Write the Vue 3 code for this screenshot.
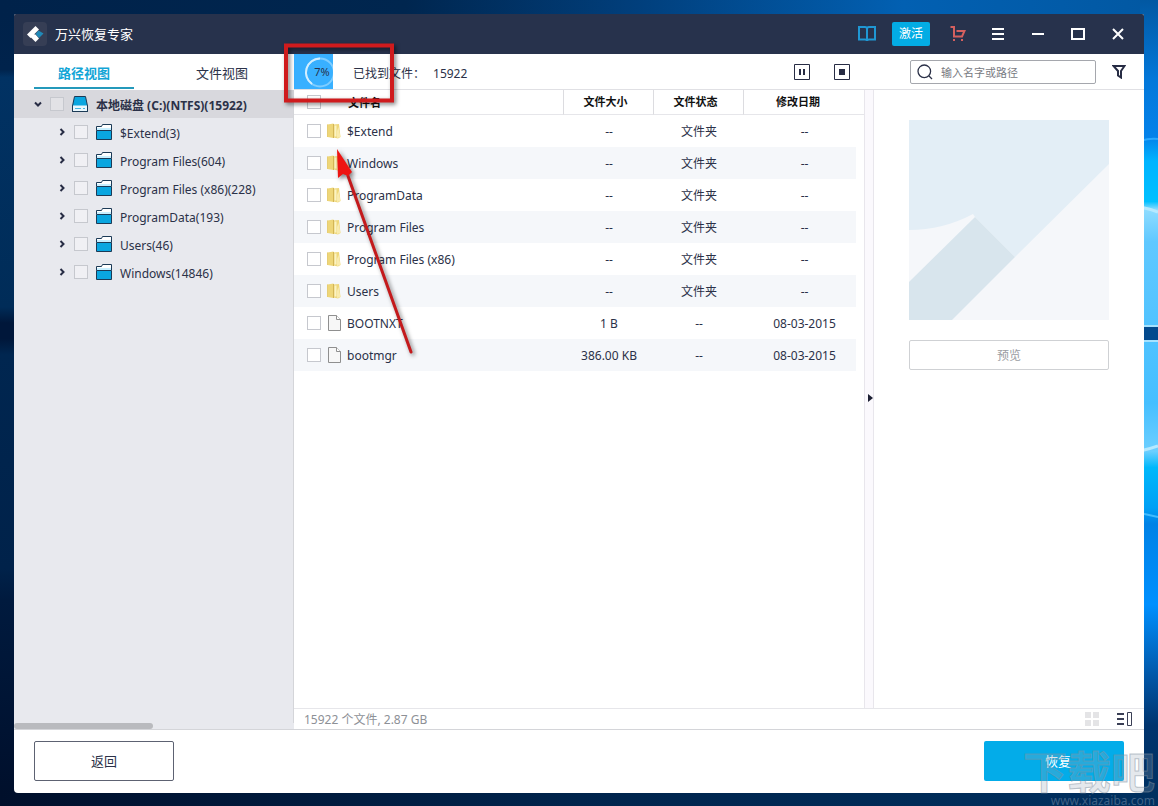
<script setup>
import { ref } from 'vue'

const tree = [
  '$Extend(3)',
  'Program Files(604)',
  'Program Files (x86)(228)',
  'ProgramData(193)',
  'Users(46)',
  'Windows(14846)'
]

const files = [
  { name: '$Extend', dir: true, size: '--', status: '文件夹', date: '--' },
  { name: 'Windows', dir: true, size: '--', status: '文件夹', date: '--' },
  { name: 'ProgramData', dir: true, size: '--', status: '文件夹', date: '--' },
  { name: 'Program Files', dir: true, size: '--', status: '文件夹', date: '--' },
  { name: 'Program Files (x86)', dir: true, size: '--', status: '文件夹', date: '--' },
  { name: 'Users', dir: true, size: '--', status: '文件夹', date: '--' },
  { name: 'BOOTNXT', dir: false, size: '1 B', status: '--', date: '08-03-2015' },
  { name: 'bootmgr', dir: false, size: '386.00 KB', status: '--', date: '08-03-2015' }
]

const query = ref('')
</script>

<template>
  <div class="desktop">
    <svg class="wallpaper" viewBox="0 0 1158 806" preserveAspectRatio="none" aria-hidden="true">
      <defs>
        <linearGradient id="topSky" x1="0" x2="1" y1="0" y2="0">
          <stop offset="0" stop-color="#00224a" />
          <stop offset="0.35" stop-color="#00264f" />
          <stop offset="0.55" stop-color="#013f7c" />
          <stop offset="0.78" stop-color="#0260b2" />
          <stop offset="1" stop-color="#0258a2" />
        </linearGradient>
        <linearGradient id="leftSky" x1="0" x2="0" y1="0" y2="1">
          <stop offset="0" stop-color="#00224a" />
          <stop offset="0.07" stop-color="#00234c" />
          <stop offset="0.08" stop-color="#013263" />
          <stop offset="0.37" stop-color="#002c58" />
          <stop offset="0.39" stop-color="#00173a" />
          <stop offset="0.41" stop-color="#00173a" />
          <stop offset="0.43" stop-color="#002650" />
          <stop offset="0.7" stop-color="#00224a" />
          <stop offset="0.74" stop-color="#001a3e" />
          <stop offset="1" stop-color="#000f2b" />
        </linearGradient>
        <linearGradient id="rightSky" x1="0" x2="0" y1="0" y2="1">
          <stop offset="0" stop-color="#0258a2" />
          <stop offset="0.1" stop-color="#0378da" />
          <stop offset="0.17" stop-color="#0482ea" />
          <stop offset="0.2" stop-color="#00b4ff" />
          <stop offset="0.25" stop-color="#00c0ff" />
          <stop offset="0.26" stop-color="#8fdcff" />
          <stop offset="0.3" stop-color="#5fc8ff" />
          <stop offset="0.5" stop-color="#45bfff" />
          <stop offset="0.56" stop-color="#6ccfff" />
          <stop offset="0.58" stop-color="#00b8fb" />
          <stop offset="0.63" stop-color="#00a0f5" />
          <stop offset="0.65" stop-color="#0082e6" />
          <stop offset="0.75" stop-color="#0090ff" />
          <stop offset="0.84" stop-color="#0156a6" />
          <stop offset="0.9" stop-color="#00346e" />
          <stop offset="1" stop-color="#00305f" />
        </linearGradient>
        <linearGradient id="bottomSky" x1="0" x2="1" y1="0" y2="0">
          <stop offset="0" stop-color="#000f2b" />
          <stop offset="0.5" stop-color="#00244c" />
          <stop offset="1" stop-color="#00305f" />
        </linearGradient>
      </defs>
      <rect width="1158" height="20" fill="url(#topSky)" />
      <rect y="14" width="20" height="792" fill="url(#leftSky)" />
      <rect x="1140" y="0" width="18" height="806" fill="url(#rightSky)" />
      <rect y="790" width="1158" height="16" fill="url(#bottomSky)" />
      <path d="M1140 141Q1150 138 1158 139" stroke="#2aa9ff" stroke-width="2" fill="none" />
      <path d="M1140 207Q1150 209 1158 212" stroke="#b5e9ff" stroke-width="3" fill="none" />
      <path d="M1140 451Q1150 449 1158 446" stroke="#b5e9ff" stroke-width="3" fill="none" />
      <path d="M1140 513L1158 517" stroke="#41bcff" stroke-width="2" fill="none" />
      <rect x="1140" y="325" width="18" height="17" fill="#a5e2ff" />
      <rect x="1140" y="327" width="18" height="13" fill="#034a8d" />
    </svg>

    <div class="window">
      <header class="titlebar">
        <svg class="logo" viewBox="0 0 24 24" aria-hidden="true">
          <rect width="24" height="24" rx="4" fill="#363e55" />
          <path d="M15.500 8.500L20.500 11.500L16 16L12.500 12Z" fill="#2089b8" />
          <path d="M12.500 4L16 7.500L7.500 16L4 12.500Z" fill="#fff" />
          <path d="M12.500 12.500L16 16.500L12.500 20L7 14.500L9.500 12Z" fill="#fff" />
        </svg>
        <h1>万兴恢复专家</h1>
        <button class="tool" aria-label="指南">
          <svg width="18" height="16" viewBox="0 0 18 16" fill="none" stroke="#1f97d4" stroke-width="2">
            <path d="M1 1H7Q9 1 9 3Q9 1 11 1H17V13.500H11Q9 13.500 9 15Q9 13.500 7 13.500H1ZM9 3V15" />
          </svg>
        </button>
        <button class="activate">激活</button>
        <button class="tool" aria-label="购物车">
          <svg width="16" height="16" viewBox="0 0 16 16" fill="none" stroke="#d5605f" stroke-width="2">
            <path d="M0.500 1H4V10.500H12L14.500 5H6.500" />
            <path d="M3 14H5M11 14H13" />
          </svg>
        </button>
        <button class="tool" aria-label="菜单">
          <svg width="12" height="12" viewBox="0 0 12 12" stroke="#fff" stroke-width="2"><path d="M0 1H12M0 6H12M0 11H12" /></svg>
        </button>
        <button class="tool" aria-label="最小化">
          <svg width="12" height="12" viewBox="0 0 12 12" stroke="#fff" stroke-width="2"><path d="M0 6H12" /></svg>
        </button>
        <button class="tool" aria-label="最大化">
          <svg width="14" height="12" viewBox="0 0 14 12" fill="none" stroke="#fff" stroke-width="2"><path d="M1 1H13V11H1Z" /></svg>
        </button>
        <button class="tool" aria-label="关闭">
          <svg width="12" height="12" viewBox="0 0 12 12" stroke="#fff" stroke-width="2"><path d="M1 1L11 11M11 1L1 11" /></svg>
        </button>
      </header>

      <div class="body">
        <aside class="sidebar">
          <nav class="tabs">
            <button class="tab active">路径视图</button>
            <button class="tab">文件视图</button>
          </nav>
          <ul class="tree">
            <li class="node root">
              <svg class="caret" viewBox="0 0 8 8" fill="none" stroke="#272c44" stroke-width="2"><path d="M1 2.500L4 5.500L7 2.500" /></svg>
              <label>
                <input type="checkbox" />
                <svg class="glyph" viewBox="0 0 16 16">
                  <path d="M2.500 0.500H13.500L15.500 10V15.500H0.500V10Z" fill="#0aa6e0" stroke="#1c3a56" />
                  <path d="M1 9.500H15V15H1Z" fill="#e9f7fd" />
                  <path d="M0.500 9.500V15.500H15.500V9.500" fill="none" stroke="#1c3a56" />
                  <path d="M3 12.500H9M11 12.500H13" stroke="#45b6e2" />
                </svg>
                <span>本地磁盘 (C:)(NTFS)(15922)</span>
              </label>
            </li>
            <li v-for="item in tree" :key="item" class="node child">
              <svg class="caret" viewBox="0 0 8 8" fill="none" stroke="#272c44" stroke-width="2"><path d="M2.500 1L5.500 4L2.500 7" /></svg>
              <label>
                <input type="checkbox" />
                <svg class="glyph" viewBox="0 0 16 16">
                  <path d="M0.500 2.500H5.500L6.500 0.500H15.500V6H0.500Z" fill="#fff" stroke="#1c3a56" />
                  <path d="M1 4H15V6H1Z" fill="#c8efff" />
                  <path d="M0.500 6.500H15.500V15.500H0.500Z" fill="#0aa6e0" stroke="#1c3a56" />
                </svg>
                <span>{{ item }}</span>
              </label>
            </li>
          </ul>
          <div class="hscroll"></div>
        </aside>

        <main class="main">
          <div class="toolbar">
            <svg class="progress" viewBox="0 0 39 35" role="img" aria-label="7%">
              <rect width="39" height="35" fill="#38b0ff" />
              <circle cx="26" cy="18.500" r="14" fill="none" stroke="#7fcdff" stroke-width="2" />
              <path d="M26 4.500A14 14 0 0 0 18 30" fill="none" stroke="#d2eeff" stroke-width="2" />
              <text x="28" y="22" text-anchor="middle">7%</text>
            </svg>
            <span class="found">已找到文件：</span>
            <span class="count">15922</span>
            <button class="scan" aria-label="暂停">
              <svg width="16" height="16" viewBox="0 0 16 16" fill="none" stroke="#272c44"><path d="M0.500 0.500H15.500V15.500H0.500Z" /><path d="M6 5V11M10 5V11" stroke-width="2" /></svg>
            </button>
            <button class="scan" aria-label="停止">
              <svg width="16" height="16" viewBox="0 0 16 16" fill="none" stroke="#272c44"><path d="M0.500 0.500H15.500V15.500H0.500Z" /><path d="M5 5H11V11H5Z" fill="#272c44" stroke="none" /></svg>
            </button>
            <label class="search">
              <svg width="16" height="16" viewBox="0 0 16 16" fill="none" stroke="#2b3148" stroke-width="1.300"><circle cx="7.300" cy="7.300" r="6.300" /><path d="M12 12L15 15" /></svg>
              <input v-model="query" type="text" placeholder="输入名字或路径" aria-label="搜索" />
            </label>
            <button class="filter" aria-label="筛选">
              <svg width="14" height="14" viewBox="0 0 14 14" fill="none" stroke="#272c44" stroke-width="2"><path d="M1.500 1H12.500L9 6V12.500L6 10.500V6Z" /></svg>
            </button>
          </div>

          <div class="content">
            <div class="list">
              <table>
                <thead>
                  <tr>
                    <th class="name">
                      <label><input type="checkbox" /><span>文件名</span></label>
                    </th>
                    <th class="size">文件大小</th>
                    <th class="status">文件状态</th>
                    <th class="date">修改日期</th>
                  </tr>
                </thead>
                <tbody>
                  <tr v-for="f in files" :key="f.name">
                    <td class="name">
                      <label>
                        <input type="checkbox" />
                        <svg v-if="f.dir" class="file" viewBox="0 0 14 16">
                          <path d="M0.500 1.500L6.500 0.500V15L0.500 14Z" fill="#eed678" />
                          <path d="M0.500 1.500V14" stroke="#e6cd74" />
                          <path d="M6.500 1.500L12 1L13.500 14L11 15.500L6.500 14.500Z" fill="#efd87c" />
                          <path d="M7.500 2.500H9.500V13.500H7.500Z" fill="#fbf3c4" />
                          <path d="M10 8L11.500 4L13.500 14L10 15Z" fill="#f9ebae" />
                          <path d="M6.500 1V15" stroke="#d3b555" />
                        </svg>
                        <svg v-else class="file" viewBox="0 0 14 16" fill="#f7f7f7" stroke="#8f8f8f">
                          <path d="M1.500 0.500H9.500L13.500 4.500V15.500H1.500Z" />
                          <path d="M9.500 0.500V4.500H13.500" fill="#fff" />
                        </svg>
                        <span>{{ f.name }}</span>
                      </label>
                    </td>
                    <td>{{ f.size }}</td>
                    <td>{{ f.status }}</td>
                    <td>{{ f.date }}</td>
                  </tr>
                </tbody>
              </table>
            </div>
            <button class="splitter" aria-label="收起预览">
              <svg width="5" height="8" viewBox="0 0 5 8"><path d="M0 0L5 4L0 8Z" fill="#1d2033" /></svg>
            </button>
            <section class="preview">
              <svg viewBox="0 0 200 200" aria-hidden="true">
                <rect width="200" height="200" fill="#f5f7fa" />
                <path d="M0 0H200V44L106 137L66 97L64 94Q34 110 0 110Z" fill="#e3eef6" />
                <path d="M0 162L66 97L106 137L43 200H0Z" fill="#d8e5ed" />
              </svg>
              <button>预览</button>
            </section>
          </div>

          <div class="statusbar">
            <span>15922 个文件, 2.87 GB</span>
            <button aria-label="网格视图">
              <svg width="14" height="14" viewBox="0 0 14 14" fill="#e4e4e6"><path d="M0 0H6V6H0ZM8 0H14V6H8ZM0 8H6V14H0ZM8 8H14V14H8Z" /></svg>
            </button>
            <button aria-label="列表视图">
              <svg width="15" height="14" viewBox="0 0 15 14" fill="none" stroke="#3a3f55"><path d="M0 2H7M0 7H7M0 12H7" stroke-width="2" /><path d="M10.500 0.500H14.500V13.500H10.500Z" /></svg>
            </button>
          </div>
        </main>
      </div>

      <footer class="footer">
        <button class="back">返回</button>
        <button class="recover">恢复</button>
      </footer>
    </div>

    <svg class="callout" width="430" height="370" viewBox="0 0 430 370" aria-hidden="true">
      <rect x="286" y="45.500" width="106" height="55" fill="none" stroke="#cf1b1d" stroke-width="4" />
      <path d="M348 176L411 352" stroke="#c41a1c" stroke-width="3" stroke-linecap="round" />
      <path d="M337 149L352 172L348 176L343 174L338 178Z" fill="#ee1411" />
    </svg>

    <div class="watermark">
      <strong>下载吧</strong>
      <small>www.xiazaiba.com</small>
    </div>
  </div>
</template>

<style>
body {
  margin: 0;
}
</style>

<style scoped>
.desktop {
  position: relative;
  box-sizing: border-box;
  min-height: 100vh;
  padding: 14px 14px 13px;
  display: flex;
  overflow: hidden;
  background: #00224a;
  color: #2b3148;
  font: 12px/20px "Noto Sans", "Noto Sans CJK SC", sans-serif;
}
.desktop * {
  box-sizing: border-box;
}
.wallpaper {
  position: absolute;
  inset: 0;
  width: 100%;
  height: 100%;
}
svg {
  display: block;
  flex: none;
}
button {
  margin: 0;
  padding: 0;
  border: 0;
  background: none;
  color: inherit;
  font: inherit;
}
input {
  margin: 0;
  font: inherit;
}
input[type="checkbox"] {
  appearance: none;
  flex: none;
  width: 14px;
  height: 14px;
  border: 1px solid #c6c8ce;
  background: #fff;
}
.window {
  position: relative;
  flex: 1;
  min-width: 0;
  display: flex;
  flex-direction: column;
  border-radius: 2px 2px 4px 4px;
  overflow: hidden;
  background: #fff;
}
.titlebar {
  height: 40px;
  padding: 0 6px 0 9px;
  display: flex;
  align-items: center;
  background: #27324c;
  color: #fff;
}
.logo {
  width: 24px;
  height: 24px;
}
h1 {
  flex: 1;
  margin: 0 0 0 8px;
  font-size: 13px;
  font-weight: 400;
}
.tool {
  width: 40px;
  height: 40px;
  display: flex;
  align-items: center;
  justify-content: center;
}
.activate {
  width: 38px;
  height: 24px;
  margin: 0 8px 0 5px;
  border-radius: 2px;
  background: #03ace4;
}
.body {
  flex: 1;
  min-height: 0;
  display: flex;
  border-bottom: 1px solid #d4d5d9;
}
.sidebar {
  width: 280px;
  flex: none;
  display: flex;
  flex-direction: column;
  background: #e8e9ee;
}
.tabs {
  height: 36px;
  padding: 0 20px;
  display: flex;
  gap: 38px;
  background: #fff;
}
.tab {
  width: 100px;
  height: 35px;
  padding-top: 4px;
  font-size: 13px;
  border-bottom: 2px solid transparent;
}
.active {
  color: #12a5d6;
  border-color: #2499bb;
  font-weight: 700;
}
.tree {
  flex: 1;
  margin: 0;
  padding: 0;
  list-style: none;
  border-right: 1px solid #d4d5d9;
}
.node {
  height: 28px;
  display: flex;
  align-items: center;
}
.node label {
  display: flex;
  align-items: center;
}
.node input {
  background: #f0f0f4;
  margin-right: 8px;
}
.root {
  padding-left: 20px;
  background: #d8d8dd;
  font-weight: 700;
}
.root input {
  background: #e2e2e6;
}
.child {
  padding-left: 44px;
}
.caret {
  width: 8px;
  height: 8px;
  margin-right: 8px;
}
.glyph {
  width: 16px;
  height: 16px;
  margin-right: 8px;
}
.node span {
  padding-top: 4px;
  white-space: nowrap;
}
.hscroll {
  width: 139px;
  height: 6px;
  border-radius: 3px;
  background: #b9babe;
}
.main {
  flex: 1;
  min-width: 0;
  display: flex;
  flex-direction: column;
}
.toolbar {
  height: 36px;
  padding-right: 18px;
  display: flex;
  align-items: center;
  border-bottom: 1px solid #e0e0e4;
}
.progress {
  width: 39px;
  height: 35px;
}
.progress text {
  fill: #27324c;
  font-size: 11px;
}
.found {
  padding-top: 4px;
  margin: 0 8px 0 20px;
}
.count {
  flex: 1;
  padding-top: 4px;
}
.scan {
  margin-right: 24px;
}
.search {
  width: 186px;
  height: 24px;
  margin: 1px 16px 0 36px;
  padding: 0 6px;
  display: flex;
  align-items: center;
  gap: 8px;
  border: 1px solid #a5a7ad;
  border-radius: 2px;
}
.search input {
  flex: 1;
  min-width: 0;
  height: 20px;
  padding: 2px 0 0;
  border: 0;
  outline: 0;
  background: none;
  font-size: 11px;
}
.search input::placeholder {
  color: #77797f;
}
.content {
  flex: 1;
  min-height: 0;
  display: flex;
}
.list {
  flex: 1;
  min-width: 0;
}
table {
  width: 100%;
  table-layout: fixed;
  border-collapse: separate;
  border-spacing: 0;
}
th {
  height: 25px;
  padding: 0;
  border-bottom: 1px solid #e6e6ea;
  border-left: 1px solid #dcdce0;
  color: #111;
  font-size: 11px;
  font-weight: 700;
}
th.name {
  border-left: 0;
}
.name {
  text-align: left;
}
.name label {
  padding-left: 13px;
  display: flex;
  align-items: center;
}
th.name label {
  gap: 27px;
}
.size,
.status {
  width: 90px;
}
.date {
  width: 121px;
}
th.size,
th.status {
  padding-right: 6px;
}
th.date {
  padding-right: 12px;
}
td {
  height: 32px;
  padding: 2px 0 0 2px;
  text-align: center;
}
td.name {
  padding: 0;
}
.name span {
  padding-top: 2px;
}
tbody tr:nth-child(even) {
  background: linear-gradient(90deg, #f5f7fa calc(100% - 8px), transparent calc(100% - 8px));
}
.file {
  width: 14px;
  height: 16px;
  margin: 0 6px;
}
.splitter {
  width: 10px;
  padding-left: 3px;
  padding-bottom: 2px;
  border: 1px solid #e8e6ec;
  border-width: 0 1px;
  background: #fbf9fd;
}
.preview {
  width: 270px;
  padding: 30px 35px;
}
.preview svg {
  width: 100%;
}
.preview button {
  width: 100%;
  height: 30px;
  margin-top: 20px;
  padding-top: 2px;
  border: 1px solid #cfd1d4;
  border-radius: 2px;
  color: #9a9ca2;
}
.statusbar {
  height: 21px;
  padding: 0 12px 0 10px;
  display: flex;
  align-items: center;
  gap: 18px;
  border-top: 1px solid #e6e6ea;
  color: #8d9096;
}
.statusbar span {
  flex: 1;
  padding-top: 1px;
}
.footer {
  height: 63px;
  padding: 0 20px 2px;
  display: flex;
  align-items: center;
  justify-content: space-between;
}
.footer button {
  width: 140px;
  height: 40px;
  border-radius: 2px;
  font-size: 13px;
}
.back {
  border: 1px solid #5d6272;
}
.footer .recover {
  padding-left: 8px;
  background: #03ace9;
  color: #fff;
}
.callout {
  position: absolute;
  left: 0;
  top: 0;
  pointer-events: none;
  filter: drop-shadow(2px 2px 2px rgba(0, 0, 0, 0.5));
}
.watermark {
  position: absolute;
  right: 3px;
  bottom: 0;
  display: flex;
  flex-direction: column;
  align-items: flex-end;
  pointer-events: none;
}
.watermark strong {
  font-size: 44px;
  line-height: 48px;
  font-weight: 700;
  color: rgba(150, 165, 180, 0.25);
  -webkit-text-stroke: 1px rgba(130, 145, 160, 0.5);
}
.watermark small {
  font-size: 12px;
  line-height: 10px;
  color: rgba(140, 160, 185, 0.45);
}
</style>
